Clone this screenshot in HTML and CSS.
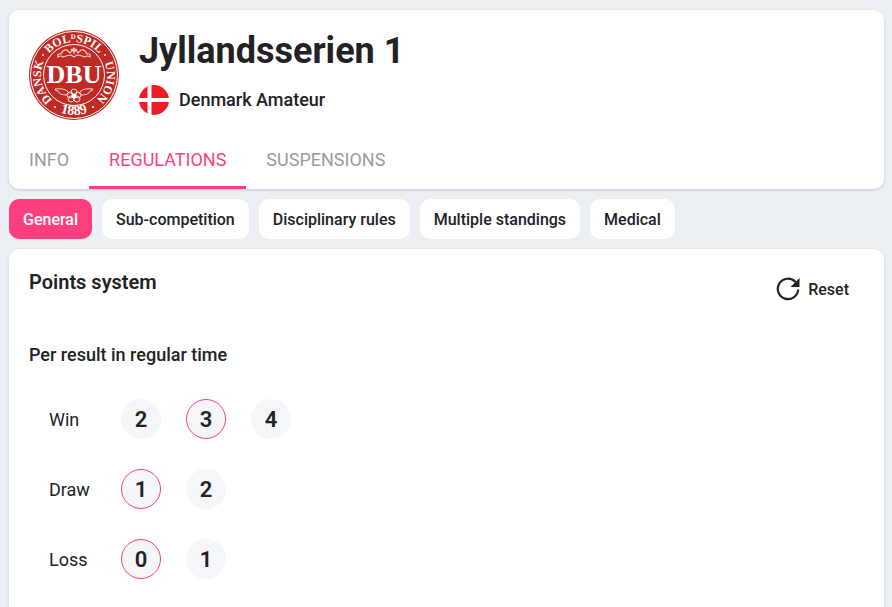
FILE: index.html
```html
<!DOCTYPE html>
<html lang="en">
<head>
  <meta charset="UTF-8">
  <meta name="viewport" content="width=device-width, initial-scale=1.0">
  <title>Jyllandsserien 1 - Regulations</title>
  <link rel="stylesheet" href="styles.css">
</head>
<body>
  <header class="card header">
    <div class="competition">
      <svg class="logo" viewBox="0 0 90 90" role="img" aria-label="Dansk Boldspil-Union">
        <defs>
          <path id="ring" d="M45 78A33 33 0 0 1 45 12A33 33 0 0 1 45 78"/>
          <path id="ring-bottom" d="M5 45A40 40 0 0 0 85 45"/>
        </defs>
        <circle cx="45" cy="45" r="45" fill="#bf2a24"/>
        <circle cx="45" cy="45" r="43.500" fill="none" stroke="#fff" stroke-width="1"/>
        <circle cx="45" cy="45" r="30.500" fill="none" stroke="#fff" stroke-width="1"/>
        <g class="ring-text" text-anchor="middle">
          <text><textPath href="#ring" startOffset="21.500%">DANSK</textPath></text>
          <text><textPath href="#ring" startOffset="50%">BOL<tspan class="raised" dy="-3">D</tspan><tspan dy="3">SPIL</tspan></textPath></text>
          <text><textPath href="#ring" startOffset="78.500%">UNION</textPath></text>
          <text class="year"><textPath href="#ring-bottom" startOffset="50%">1889</textPath></text>
        </g>
        <g fill="#fff">
          <circle cx="14" cy="25" r="1"/>
          <circle cx="76" cy="25" r="1"/>
          <circle cx="26" cy="77" r="1"/>
          <circle cx="64" cy="77" r="1"/>
        </g>
        <!-- crown scroll -->
        <g fill="none" stroke="#fff" stroke-width="1.100" opacity=".8">
          <path d="M29 27q-1-4 3-3q2-5 6-4l3 3q2-3 4-5q2 2 4 5l3-3q4-1 6 4q4-1 3 3q-3-2-5 0q-5-2-8-2l-3 2l-3-2q-3 0-8 2q-2-2-5 0z"/>
          <path d="M42 19l3 3l3-3M45 18v6"/>
        </g>
        <text class="logo-name" x="45" y="53" text-anchor="middle">DBU</text>
        <!-- flower and leaves -->
        <g fill="none" stroke="#fff" stroke-width="1" opacity=".85">
          <path d="M38 65q-8 0-9-4q-3 0-3-2q9-1 12 2q2 1 2 3M52 65q8 0 9-4q3 0 3-2q-9-1-12 2q-2 1-2 3"/>
          <circle cx="45" cy="62" r="3"/>
          <circle cx="49" cy="65" r="3"/>
          <circle cx="48" cy="69" r="3"/>
          <circle cx="42" cy="69" r="3"/>
          <circle cx="41" cy="65" r="3"/>
        </g>
        <circle cx="45" cy="66" r="2.500" fill="#fff"/>
      </svg>
      <div class="competition-info">
        <h1 class="title">Jyllandsserien 1</h1>
        <div class="category">
          <svg class="flag" viewBox="0 0 30 30" aria-hidden="true">
            <circle cx="15" cy="15" r="15" fill="#ee1c25"/>
            <path d="M8.500 1.500Q10.500.6 12.500 0V13H30V17H12.500V30Q10.500 29.500 8.500 28.500V17H0V13H8.500z" fill="#fff"/>
          </svg>
          <span>Denmark Amateur</span>
        </div>
      </div>
    </div>
    <nav class="tabs">
      <a class="tab" href="#info">INFO</a>
      <a class="tab active" href="#regulations">REGULATIONS</a>
      <a class="tab" href="#suspensions">SUSPENSIONS</a>
    </nav>
  </header>

  <nav class="filters">
    <button class="filter active" type="button">General</button>
    <button class="filter" type="button">Sub-competition</button>
    <button class="filter" type="button">Disciplinary rules</button>
    <button class="filter" type="button">Multiple standings</button>
    <button class="filter" type="button">Medical</button>
  </nav>

  <main class="card panel">
    <div class="panel-head">
      <h2 class="panel-title">Points system</h2>
      <button class="reset" type="reset" form="points">
        <svg class="reset-icon" viewBox="0 0 24 24" aria-hidden="true">
          <path d="M19.500 5A10.200 10.200 0 1 0 22.200 12.500" fill="none" stroke="#222226" stroke-width="2.200"/>
          <path d="M23.500 1V10H14.500z" fill="#222226"/>
        </svg>
        Reset
      </button>
    </div>

    <h3 class="subtitle">Per result in regular time</h3>
    <form class="points" id="points">
      <div class="row" role="radiogroup" aria-labelledby="win">
        <span class="row-label" id="win">Win</span>
        <label class="point"><input type="radio" name="win" value="2"><span>2</span></label>
        <label class="point"><input type="radio" name="win" value="3" checked><span>3</span></label>
        <label class="point"><input type="radio" name="win" value="4"><span>4</span></label>
      </div>
      <div class="row" role="radiogroup" aria-labelledby="draw">
        <span class="row-label" id="draw">Draw</span>
        <label class="point"><input type="radio" name="draw" value="1" checked><span>1</span></label>
        <label class="point"><input type="radio" name="draw" value="2"><span>2</span></label>
      </div>
      <div class="row" role="radiogroup" aria-labelledby="loss">
        <span class="row-label" id="loss">Loss</span>
        <label class="point"><input type="radio" name="loss" value="0" checked><span>0</span></label>
        <label class="point"><input type="radio" name="loss" value="1"><span>1</span></label>
      </div>
    </form>
  </main>
</body>
</html>
```
FILE: styles.css
```css
* {
  box-sizing: border-box;
}

body {
  margin: 0;
  padding: 10px 8px 0 9px;
  min-height: 100vh;
  display: flex;
  flex-direction: column;
  gap: 10px;
  background: #ecf0f5;
  color: #222226;
  font-family: Roboto, "Liberation Sans", sans-serif;
  font-size: 18px;
}

h1, h2, h3 {
  margin: 0;
}

button {
  font-family: inherit;
  color: inherit;
  border: none;
  cursor: pointer;
}

.card {
  background: #fff;
  border-radius: 10px;
  box-shadow: 0 1px 3px rgba(40, 50, 90, 0.2);
}

.competition {
  display: flex;
  gap: 20px;
  padding: 20px 20px 0;
}

.logo {
  width: 90px;
  height: 90px;
}

.ring-text {
  fill: #fff;
  font-family: "Liberation Serif", serif;
  font-size: 12px;
  font-weight: bold;
}

.raised {
  font-size: 7px;
}

.year {
  font-size: 14px;
}

.logo-name {
  fill: #fff;
  font-family: "Liberation Serif", serif;
  font-size: 26px;
  font-weight: bold;
}

.title {
  font-size: 36px;
  line-height: 42px;
  font-weight: 700;
}

.category {
  display: flex;
  align-items: center;
  gap: 10px;
  margin-top: 13px;
  line-height: 20px;
  font-weight: 500;
}

.flag {
  width: 30px;
  height: 30px;
}

.tabs {
  display: flex;
  margin-top: 10px;
}

.tab {
  height: 59px;
  line-height: 59px;
  padding: 0 20px;
  color: #9a9a9e;
  text-decoration: none;
}

.tab.active {
  color: #ff3f7d;
  border-bottom: 3px solid #ff3f7d;
}

.filters {
  display: flex;
  gap: 10px;
}

.filter {
  height: 40px;
  padding: 0 14px;
  border-radius: 10px;
  background: #fff;
  font-size: 16px;
  font-weight: 500;
}

.filter.active {
  background: #ff3f7d;
  color: #fff;
}

.panel {
  flex: 1;
  padding: 20px 20px 28px;
  border-radius: 10px 10px 0 0;
}

.panel-head {
  display: flex;
  justify-content: space-between;
  height: 40px;
}

.panel-title {
  font-size: 20px;
  line-height: 26px;
  font-weight: 600;
}

.reset {
  display: flex;
  align-items: center;
  gap: 8px;
  padding: 0 15px;
  background: none;
  font-size: 16px;
  font-weight: 500;
}

.reset-icon {
  width: 24px;
  height: 24px;
}

.subtitle {
  margin-top: 36px;
  font-size: 18px;
  line-height: 20px;
  font-weight: 500;
}

.points {
  display: grid;
  gap: 30px;
  padding: 34px 20px 0;
}

.row {
  display: flex;
  align-items: center;
  gap: 25px;
}

.row-label {
  width: 47px;
}

.point {
  display: grid;
  place-items: center;
  cursor: pointer;
  font-size: 22px;
  font-weight: 600;
}

.point input,
.point span {
  grid-area: 1 / 1;
}

.point input {
  appearance: none;
  width: 40px;
  height: 40px;
  margin: 0;
  border-radius: 50%;
  background: #f4f6fa;
  cursor: pointer;
}

.point input:checked {
  border: 1px solid #ff3f7d;
}
```
